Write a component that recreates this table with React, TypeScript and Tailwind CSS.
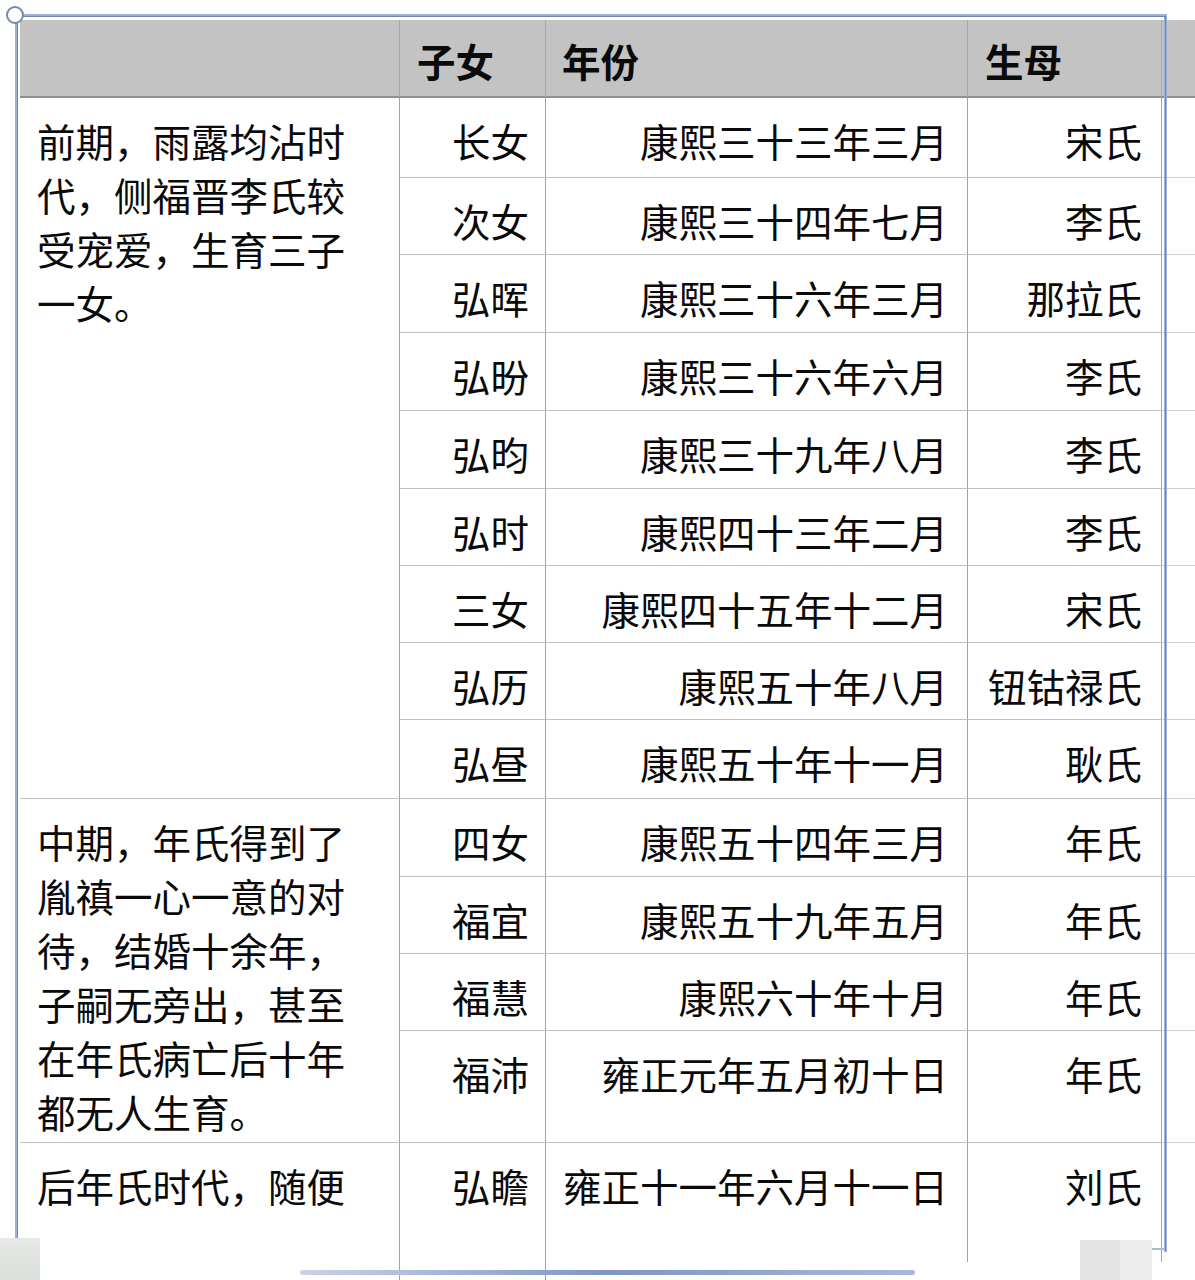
import React from "react";

type Row = { child: string; year: string; mother: string; h: string };

const rows: Row[] = [
    { child: "长女", year: "康熙三十三年三月", mother: "宋氏", h: "h-[80px]" },
    { child: "次女", year: "康熙三十四年七月", mother: "李氏", h: "h-[77px]" },
    { child: "弘晖", year: "康熙三十六年三月", mother: "那拉氏", h: "h-[78px]" },
    { child: "弘昐", year: "康熙三十六年六月", mother: "李氏", h: "h-[78px]" },
    { child: "弘昀", year: "康熙三十九年八月", mother: "李氏", h: "h-[78px]" },
    { child: "弘时", year: "康熙四十三年二月", mother: "李氏", h: "h-[77px]" },
    { child: "三女", year: "康熙四十五年十二月", mother: "宋氏", h: "h-[77px]" },
    { child: "弘历", year: "康熙五十年八月", mother: "钮钴禄氏", h: "h-[77px]" },
    { child: "弘昼", year: "康熙五十年十一月", mother: "耿氏", h: "h-[79px]" },
    { child: "四女", year: "康熙五十四年三月", mother: "年氏", h: "h-[78px]" },
    { child: "福宜", year: "康熙五十九年五月", mother: "年氏", h: "h-[77px]" },
    { child: "福慧", year: "康熙六十年十月", mother: "年氏", h: "h-[77px]" },
    { child: "福沛", year: "雍正元年五月初十日", mother: "年氏", h: "h-[112px]" },
    { child: "弘瞻", year: "雍正十一年六月十一日", mother: "刘氏", h: "h-[140px]" },
];

// merged description cells in the first column
const groups: { start: number; span: number; lines: string[] }[] = [
    { start: 0, span: 9, lines: ["前期，雨露均沾时", "代，侧福晋李氏较", "受宠爱，生育三子", "一女。"] },
    {
        start: 9,
        span: 4,
        lines: ["中期，年氏得到了", "胤禛一心一意的对", "待，结婚十余年，", "子嗣无旁出，甚至", "在年氏病亡后十年", "都无人生育。"],
    },
    { start: 13, span: 1, lines: ["后年氏时代，随便"] },
];

const cell = "align-top pt-[15px] border-b border-r border-b-[#c2c2c2] border-r-[#a3a3a3] leading-[54px] whitespace-nowrap";
const head = "border-b-2 border-r border-b-[#8e8e8e] border-r-[#a8a8a8] text-left pt-[6px] font-bold";

export default function App() {
    return (
        <div
            className="relative w-[1195px] h-[1280px] overflow-hidden bg-white text-[#0a0a0a]"
            style={{ fontFamily: '"Noto Sans CJK SC", "Noto Sans", sans-serif' }}
        >
            <div className="pl-[20px] pt-[20px]">
                <table className="table-fixed border-separate border-spacing-0 w-[1175px] text-[38.5px]">
                    <colgroup>
                        <col className="w-[380px]" />
                        <col className="w-[146px]" />
                        <col className="w-[422px]" />
                        <col className="w-[194px]" />
                        <col className="w-[33px]" />
                    </colgroup>
                    <thead>
                        <tr className="h-[78px] bg-[#c3c3c3]">
                            <th className="border-b-2 border-r border-b-[#8e8e8e] border-r-[#a8a8a8]" />
                            <th className={`${head} pl-[17px]`}>子女</th>
                            <th className={`${head} pl-[16px]`}>年份</th>
                            <th className={`${head} pl-[17px]`}>生母</th>
                            <th className="border-b-2 border-b-[#8e8e8e]" />
                        </tr>
                    </thead>
                    <tbody>
                        {rows.map((r, i) => {
                            const g = groups.find((x) => x.start === i);
                            return (
                                <tr key={r.child} className={r.h}>
                                    {g && (
                                        <td rowSpan={g.span} className={`${cell} pl-[17px] border-r-[#9a9a9a]`}>
                                            {g.lines.map((l) => (
                                                <div key={l}>{l}</div>
                                            ))}
                                        </td>
                                    )}
                                    <td className={`${cell} text-right pr-[16px]`}>{r.child}</td>
                                    <td className={`${cell} text-right pr-[19px]`}>{r.year}</td>
                                    <td className={`${cell} text-right pr-[19px]`}>{r.mother}</td>
                                    <td className="border-b border-b-[#cfcfcf]" />
                                </tr>
                            );
                        })}
                    </tbody>
                </table>
            </div>

            {/* selection frame */}
            <div className="pointer-events-none absolute left-[15px] top-[14px] w-[1152px] h-[1238px] border-[3px] border-[#9db1d6] border-b-0" />
            <div className="pointer-events-none absolute left-[17px] top-[16px] w-[1149px] h-[1235px] border border-[#6f86b3] border-b-0" />
            <div className="absolute left-[1135px] top-[1248px] w-[30px] h-[2px] bg-[#a9b8d4]" />
            <div className="absolute left-[6px] top-[6px] w-[18px] h-[18px] rounded-full border-2 border-[#7688aa] bg-white" />

            {/* bottom photo artifacts */}
            <div className="absolute left-[300px] top-[1270px] w-[615px] h-[5px] rounded-full bg-gradient-to-r from-[#c9d3e6] via-[#7f96c2] to-[#a9b8d6]" />
            <div className="absolute left-[915px] top-[1262px] w-[280px] h-[18px] bg-white" />
            <div className="absolute left-0 top-[1238px] w-[40px] h-[42px] bg-gradient-to-b from-[#e6e9e6] to-[#dadfda]" />
            <div className="absolute left-[1080px] top-[1240px] w-[72px] h-[40px] flex">
                <div className="w-[40px] bg-[#e3e3e3]" />
                <div className="flex-1 bg-[#ececec]" />
            </div>
        </div>
    );
}
